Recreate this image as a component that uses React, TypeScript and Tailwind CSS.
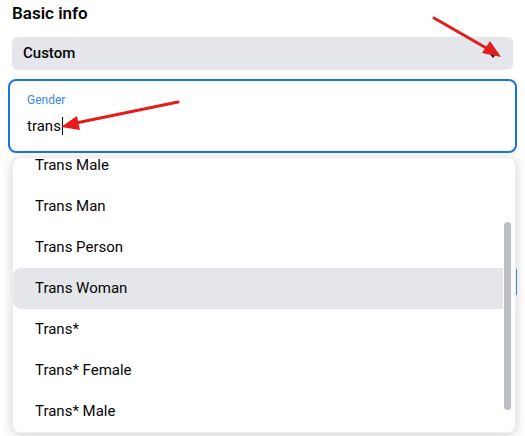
import React from 'react';

const options = ['Trans Male', 'Trans Man', 'Trans Person', 'Trans Woman', 'Trans*', 'Trans* Female', 'Trans* Male'];

const App: React.FC = () => {
  const active = 'Trans Woman';

  return (
    <div
      className="relative w-[525px] h-[436px] overflow-hidden bg-white text-[#050505]"
      style={{ fontFamily: '"Segoe UI", Roboto, "Liberation Sans", sans-serif' }}
    >
      <h2 className="px-3 pt-[2px] text-[17px] font-semibold leading-[22px]">Basic info</h2>

      <div className="mx-3 mt-[13px] h-[33px] rounded-md bg-[#e4e6eb] flex items-center justify-between pl-[11px] pr-[14px]">
        <span className="text-[15px] font-medium">Custom</span>
        <svg width="12" height="8" viewBox="0 0 12 8" className="mt-[2px]">
          <path d="M1 1h10L6 7z" fill="#1c1e21" />
        </svg>
      </div>

      <div className="mx-2 mt-[9px] h-[74px] rounded-lg border-2 border-[#1b74e4] px-[17px] pt-[11px]">
        <div className="text-[12px] leading-[16px] text-[#3b88e8]">Gender</div>
        <div className="mt-[8px] flex items-center text-[15px] leading-[20px]">
          <span>trans</span>
          <span className="ml-[1px] inline-block h-[18px] w-[1px] bg-[#050505]" />
        </div>
      </div>

      {/* field underneath the open menu */}
      <div className="mx-3 mt-[4px] h-[40px] rounded-md bg-[#f0f2f5]" />
      <div className="ml-auto mr-[8px] mt-[72px] h-[26px] w-[2px] bg-[#4b8ee6]" />

      {/* suggestion menu */}
      <div className="absolute left-3 top-[157px] w-[504px] h-[276px] overflow-hidden rounded-lg border border-[#eceef0] bg-white shadow-[0_2px_12px_rgba(0,0,0,0.18)]">
        <ul className="-mt-[13px] pr-[12px]">
          {options.map((o) => (
            <li
              key={o}
              className={`h-[41px] flex items-center pl-[22px] text-[15px] ${o === active ? 'bg-[#e4e6e9] rounded-l-lg' : ''}`}
            >
              {o}
            </li>
          ))}
        </ul>
        <div className="absolute right-[4px] top-[64px] w-[7px] h-[188px] rounded-full bg-[#bcc0c4]" />
      </div>

      {/* red annotation arrows */}
      <svg className="absolute inset-0 pointer-events-none" width="525" height="436" viewBox="0 0 525 436">
        <line x1="434" y1="18" x2="488" y2="49" stroke="#e51c1c" strokeWidth="3" strokeLinecap="round" />
        <path d="M501 57 L482 53 L490 41 Z" fill="#e51c1c" />
        <line x1="178" y1="102" x2="76" y2="123" stroke="#e51c1c" strokeWidth="3" strokeLinecap="round" />
        <path d="M61 127 L77 116 L80 130 Z" fill="#e51c1c" />
      </svg>
    </div>
  );
};

export default App;
